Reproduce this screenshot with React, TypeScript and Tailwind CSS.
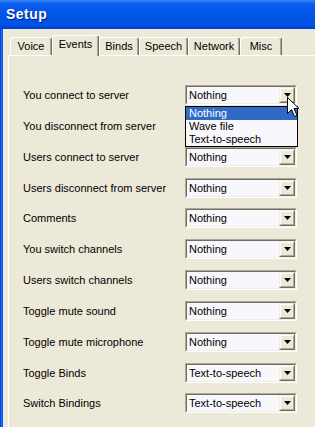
import React from "react";

const rows = [
  { label: "You connect to server", value: "Nothing", h: "h-[31px]" },
  { label: "You disconnect from server", value: "Nothing", h: "h-[31px]" },
  { label: "Users connect to server", value: "Nothing", h: "h-[31px]" },
  { label: "Users disconnect from server", value: "Nothing", h: "h-[30px]" },
  { label: "Comments", value: "Nothing", h: "h-[31px]" },
  { label: "You switch channels", value: "Nothing", h: "h-[31px]" },
  { label: "Users switch channels", value: "Nothing", h: "h-[31px]" },
  { label: "Toggle mute sound", value: "Nothing", h: "h-[31px]" },
  { label: "Toggle mute microphone", value: "Nothing", h: "h-[31px]" },
  { label: "Toggle Binds", value: "Text-to-speech", h: "h-[30px]" },
  { label: "Switch Bindings", value: "Text-to-speech", h: "h-[31px]" },
];

const tabs = [
  { name: "Voice", w: "w-[42px]" },
  { name: "Events", w: "w-[47px]", active: true },
  { name: "Binds", w: "w-[40px]" },
  { name: "Speech", w: "w-[49px]" },
  { name: "Network", w: "w-[52px]" },
  { name: "Misc", w: "w-[42px]" },
];

function Combo({ value }: { value: string }) {
  return (
    <div className="w-[112px] h-[20px] border border-t-[#aca899] border-l-[#aca899] border-b-white border-r-white">
      <div className="h-full flex items-center border border-t-[#716f64] border-l-[#716f64] border-b-[#f1efe2] border-r-[#f1efe2] bg-[#f8f8fc]">
        <span className="flex-1 pl-[2px] text-[11px] leading-[14px] text-black whitespace-nowrap">{value}</span>
        <div className="w-[16px] h-full border border-t-[#f1efe2] border-l-[#f1efe2] border-b-[#716f64] border-r-[#716f64]">
          <div className="w-full h-full flex items-center justify-center border border-t-white border-l-white border-b-[#aca899] border-r-[#aca899] bg-[#ece9d8]">
            <svg width="7" height="4" viewBox="0 0 7 4">
              <polygon points="0,0 7,0 3.5,4" fill="#000" />
            </svg>
          </div>
        </div>
      </div>
    </div>
  );
}

export default function App() {
  return (
    <div className="w-[315px] h-[427px] overflow-hidden relative flex flex-col bg-[#ece9d8] font-['Liberation_Sans',Arial,sans-serif] text-black">
      {/* Title bar */}
      <div className="h-[29px] shrink-0 flex items-center pl-[6px] bg-[linear-gradient(to_bottom,#3d8af7_0%,#0a5ef0_12%,#0056e8_45%,#0052e2_85%,#003fc8_100%)]">
        <span className="text-white font-bold text-[14px] tracking-[0.5px] [text-shadow:1px_1px_0_#0a1883]">Setup</span>
      </div>
      <div className="flex-1 flex min-h-0">
        {/* left window frame */}
        <div className="w-[3px] shrink-0 bg-[linear-gradient(to_right,#0831d9,#166aee,#0055ea)]" />
        <div className="flex-1 flex flex-col pt-[6px]">
          {/* tabs */}
          <div className="h-[20px] flex items-end ml-[7px]">
            {tabs.map((t) =>
              t.active ? (
                <div
                  key={t.name}
                  className={`${t.w} h-[21px] -mb-px relative z-10 flex items-center justify-center pb-[3px] bg-[#ece9d8] border-l border-t border-l-white border-t-white border-r border-r-[#716f64] rounded-t-[3px] shadow-[inset_-1px_0_0_#aca899] text-[11px]`}
                >
                  {t.name}
                </div>
              ) : (
                <div
                  key={t.name}
                  className={`${t.w} h-[18px] flex items-center justify-center bg-[#ece9d8] border-l border-t border-l-white border-t-white border-r border-r-[#716f64] rounded-t-[3px] shadow-[inset_-1px_0_0_#aca899] text-[11px]`}
                >
                  {t.name}
                </div>
              )
            )}
          </div>
          {/* panel */}
          <div className="flex-1 ml-[5px] border-l border-t border-l-white border-t-white pt-[29px] pl-[14px] relative">
            <div className="flex flex-col">
              {rows.map((r) => (
                <div key={r.label} className={`${r.h} flex items-start`}>
                  <div className="w-[162px] h-[20px] flex items-center text-[11px] whitespace-nowrap">{r.label}</div>
                  <Combo value={r.value} />
                </div>
              ))}
            </div>
          </div>
        </div>
      </div>

      {/* open dropdown list */}
      <div className="absolute left-[185px] top-[106px] w-[113px] border border-black bg-[#f8f8fc] z-20 flex flex-col text-[11px]">
        <div className="h-[13px] leading-[13px] pl-[3px] bg-[#316ac5] text-white">Nothing</div>
        <div className="h-[13px] leading-[13px] pl-[3px]">Wave file</div>
        <div className="h-[13px] leading-[13px] pl-[3px]">Text-to-speech</div>
      </div>

      {/* mouse cursor */}
      <svg className="absolute left-[287px] top-[97px] z-30" width="13" height="21" viewBox="0 0 13 21">
        <path d="M0.5 0.5 L0.5 16.5 L4.5 12.5 L7.5 19.5 L10 18.5 L7 11.5 L12 11.5 Z" fill="#fff" stroke="#000" strokeWidth="1" strokeLinejoin="miter" />
      </svg>
    </div>
  );
}
